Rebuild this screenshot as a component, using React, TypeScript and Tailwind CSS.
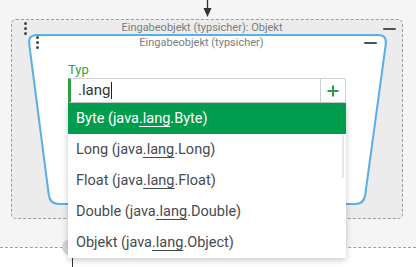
const Dots = () => (
  <div className="flex flex-col gap-[2px]">
    <span className="block w-[3px] h-[3px] rounded-full bg-[#3f4650]" />
    <span className="block w-[3px] h-[3px] rounded-full bg-[#3f4650]" />
    <span className="block w-[3px] h-[3px] rounded-full bg-[#3f4650]" />
  </div>
);

const Minus = () => <span className="block w-[13px] h-[2px] rounded-full bg-[#4b525a]" />;

const items = [
  { pre: "Byte (java", post: ".Byte)" },
  { pre: "Long (java", post: ".Long)" },
  { pre: "Float (java", post: ".Float)" },
  { pre: "Double (java", post: ".Double)" },
  { pre: "Objekt (java", post: ".Object)" },
];

export default function App() {
  return (
    <div className="relative w-[416px] h-[267px] overflow-hidden bg-[#f5f5f5] font-['Roboto',sans-serif]">
      {/* Pfeil oben */}
      <div className="h-[19px] pl-[203px]">
        <svg width="9" height="19" viewBox="0 0 9 19">
          <line x1="4.5" y1="0" x2="4.5" y2="10" stroke="#333" strokeWidth="1.3" />
          <path d="M0.5 8 L8.5 8 L4.5 17 Z" fill="#333" />
        </svg>
      </div>

      {/* äußerer Knoten */}
      <div className="ml-[11px] w-[392px] h-[200px] rounded-[5px] border border-dashed border-[#9d9d9d] bg-[#ececec]">
        <div className="flex items-start h-[14px] pt-[2px]">
          <div className="ml-[12px]">
            <Dots />
          </div>
          <div className="flex-1 text-center pr-[6px] text-[11px] leading-[14px] -mt-[1px] text-[#7c7c7c]">
            Eingabeobjekt (typsicher): Objekt
          </div>
          <div className="mr-[6px] mt-[6px]">
            <Minus />
          </div>
        </div>

        {/* innerer Knoten */}
        <div className="relative ml-[15px] w-[361px] h-[171px]">
          <svg className="absolute inset-0" width="361" height="171" viewBox="0 0 361 171">
            <path
              d="M10 1 L351 1 Q360 1 358.8 10 L338.2 161 Q337 170 328 170 L32 170 Q23 170 21.8 161 L2.2 10 Q1 1 10 1 Z"
              fill="#ffffff"
              stroke="#5aafe6"
              strokeWidth="2"
            />
          </svg>
          <div className="relative">
            <div className="flex items-start h-[18px] pt-[2px]">
              <div className="ml-[9px]">
                <Dots />
              </div>
              <div className="flex-1 text-center text-[11px] leading-[14px] text-[#7c7c7c]">
                Eingabeobjekt (typsicher)
              </div>
              <div className="mr-[11px] mt-[6px]">
                <Minus />
              </div>
            </div>
            <div className="pl-[41px] pt-[10px]">
              <div className="text-[13px] leading-[15px] text-[#33a040]">Typ</div>
              <div className="mt-[1px] flex w-[278px] h-[25px] border border-[#d0d0d0] border-l-[3px] border-l-[#2e9e45] rounded-tr-[3px] bg-white">
                <div className="flex-1 flex items-center pl-[7px] text-[15px] text-[#333]">
                  .lang
                  <span className="ml-[1px] w-[1px] h-[17px] bg-[#222]" />
                </div>
                <div className="w-[25px] flex items-center justify-center border-l border-[#d0d0d0]">
                  <svg width="12" height="12" viewBox="0 0 12 12">
                    <path d="M6 0.5 V11.5 M0.5 6 H11.5" stroke="#2e9e45" strokeWidth="2" />
                  </svg>
                </div>
              </div>
            </div>
          </div>
        </div>
      </div>

      {/* unterer Bereich */}
      <div className="mt-[28px] h-[20px] border-t border-dashed border-[#a0a0a0] bg-white relative">
        <div className="absolute left-[62px] -top-[9px] w-[16px] h-[16px] rounded-full bg-[#d6d6d6]" />
        <div className="absolute left-[72px] top-[4px] w-[1px] h-[20px] bg-[#333]" />
      </div>

      {/* Auswahlliste */}
      <div className="absolute left-[68px] top-[103px] w-[278px] bg-white shadow-[0_2px_6px_rgba(0,0,0,0.22)]">
        <div className="absolute right-[2px] top-[32px] w-[2px] h-[43px] bg-[#e6e6e6]" />
        {items.map((it, i) => (
          <div
            key={i}
            className={`h-[31px] flex items-center pl-[8px] text-[14.5px] ${
              i === 0 ? "bg-[#019d4f] text-white" : "text-[#464a4f]"
            }`}
          >
            {it.pre}
            <span className="underline underline-offset-[3px]">.lang</span>
            {it.post}
          </div>
        ))}
      </div>
    </div>
  );
}
